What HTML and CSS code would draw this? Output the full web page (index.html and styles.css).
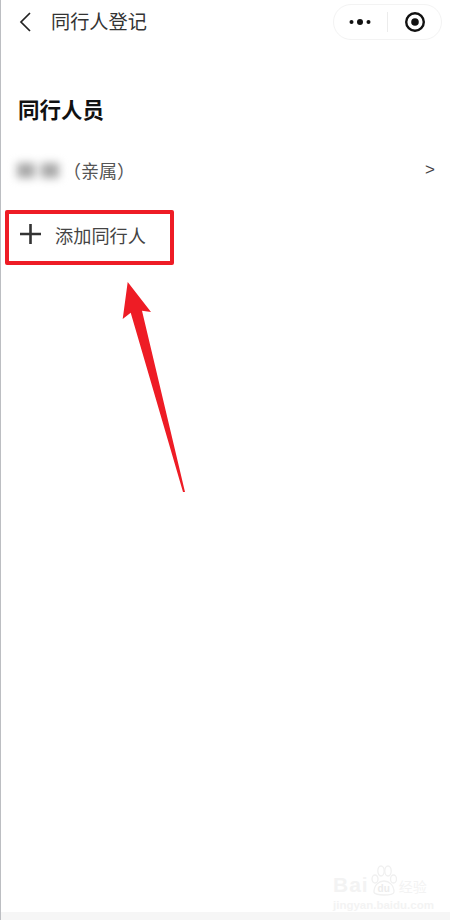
FILE: index.html
```html
<!DOCTYPE html>
<html lang="zh-CN">
<head>
<meta charset="utf-8">
<title>同行人登记</title>
<link rel="stylesheet" href="styles.css">
</head>
<body>
<div class="page">
  <header class="nav">
    <svg class="back" width="14" height="22" viewBox="0 0 14 22"><path d="M12 2 L3 11 L12 20" fill="none" stroke="#222" stroke-width="1.7"/></svg>
    <div class="nav-title">同行人登记</div>
    <div class="capsule">
      <svg class="more" width="24" height="8" viewBox="0 0 24 8"><circle cx="3.5" cy="4" r="2" fill="#111"/><circle cx="12" cy="4" r="3" fill="#111"/><circle cx="20.5" cy="4" r="2" fill="#111"/></svg>
      <span class="divider"></span>
      <svg class="target" width="22" height="22" viewBox="0 0 22 22"><circle cx="11" cy="11" r="8.8" fill="none" stroke="#111" stroke-width="2.4"/><circle cx="11" cy="11" r="3.8" fill="#111"/></svg>
    </div>
  </header>
  <main class="content">
    <h1 class="heading">同行人员</h1>
    <div class="row">
      <span class="blur-name"><i></i><i></i></span>
      <span class="relation">（亲属）</span>
      <span class="chev">&gt;</span>
    </div>
    <div class="add">
      <svg class="plus" width="22" height="22" viewBox="0 0 22 22"><path d="M0 11 H21 M10.5 1 V21" stroke="#333" stroke-width="2.6" fill="none"/></svg>
      <span class="add-text">添加同行人</span>
    </div>
  </main>
  <footer class="strip"></footer>
  <svg class="arrow" width="450" height="920" viewBox="0 0 450 920"><polygon points="127.7,282 151,312 142,310.7 185,492 183,492 130.7,312.7 122.7,319" fill="#ee1c25"/></svg>
  <div class="mark">
    <div class="mark-top">
      <span class="mark-bai">Bai</span>
      <span class="paw-wrap">
        <svg class="paw" width="26" height="32" viewBox="0 0 26 32"><g fill="#fff" stroke="#f0f0f0" stroke-width="1.3"><ellipse cx="4" cy="14" rx="3" ry="4"/><ellipse cx="10" cy="6" rx="3.2" ry="5"/><ellipse cx="17" cy="6" rx="3.2" ry="5"/><ellipse cx="22.5" cy="14" rx="3" ry="4"/><path d="M3 27 C3 20 8 16 13 16 C18 16 23 20 23 27 C23 31 3 31 3 27 Z"/></g></svg>
        <span class="paw-du">du</span>
      </span>
      <span class="mark-cn">经验</span>
    </div>
    <div class="mark-url">jingyan.baidu.com</div>
  </div>
</div>
</body>
</html>
```
FILE: styles.css
```css
* { box-sizing: border-box; }
html, body { margin: 0; padding: 0; background: #fff; }
body { font-family: "Noto Sans CJK SC", "Noto Sans", sans-serif; color: #333; }
.page { position: relative; width: 450px; height: 920px; overflow: hidden; display: flex; flex-direction: column; border-left: 1px solid #bcbec2; background: #fff; }
.nav { display: flex; align-items: center; height: 44px; padding: 0 8px 0 17px; flex: none; }
.back { flex: none; margin-right: 19px; }
.nav-title { font-size: 19.2px; line-height: 24px; color: #333; flex: 1; margin-bottom: 2px; }
.capsule { display: flex; align-items: center; width: 109px; height: 36px; border: 1px solid #f3f3f3; border-radius: 18px; padding-left: 14px; }
.divider { width: 1px; height: 20px; background: #ececec; margin: 0 16px 0 15px; }
.content { flex: 1; padding-top: 51px; }
.heading { margin: 0 0 0 17px; font-size: 21.5px; line-height: 28px; font-weight: 700; color: #111; }
.row { display: flex; align-items: center; height: 30px; margin-top: 32px; padding-left: 16px; padding-right: 15px; font-size: 18px; }
.blur-name { display: flex; gap: 6px; width: 46px; flex: none; filter: blur(4px); }
.blur-name i { display: block; width: 18px; height: 15px; background: #a8a8a8; }
.relation { flex: 1; color: #555; line-height: 24px; }
.chev { font-size: 17px; color: #444; line-height: 20px; font-family: "Liberation Sans", sans-serif; }
.add { display: flex; align-items: center; width: 169px; height: 55px; margin: 25px 0 0 4px; border: 4px solid #ee1c25; border-radius: 2px; padding-left: 11px; }
.plus { flex: none; margin-right: 13px; margin-bottom: 8px; }
.add-text { font-size: 18.2px; line-height: 24px; color: #444; margin-bottom: 5px; }
.strip { height: 8px; flex: none; background: #f6f6f6; }
.arrow { position: absolute; left: -1px; top: 0; pointer-events: none; }
.mark { position: absolute; left: 332px; top: 865px; width: 92px; color: #f3f3f3; font-family: "Liberation Sans", sans-serif; }
.mark-top { display: flex; align-items: flex-end; height: 32px; }
.mark-bai { font-size: 21px; line-height: 24px; font-weight: 700; letter-spacing: 1px; }
.paw-wrap { position: relative; display: block; width: 26px; height: 32px; margin: 0 2px 0 2px; flex: none; }
.paw { display: block; }
.paw-du { position: absolute; left: 0; right: 0; bottom: 3px; text-align: center; font-size: 10px; line-height: 11px; font-weight: 700; color: #ececec; }
.mark-cn { font-family: "Noto Sans CJK SC", sans-serif; font-size: 14px; line-height: 22px; white-space: nowrap; }
.mark-url { font-size: 11.5px; line-height: 14px; font-weight: 700; white-space: nowrap; margin-top: 1px; }
```
